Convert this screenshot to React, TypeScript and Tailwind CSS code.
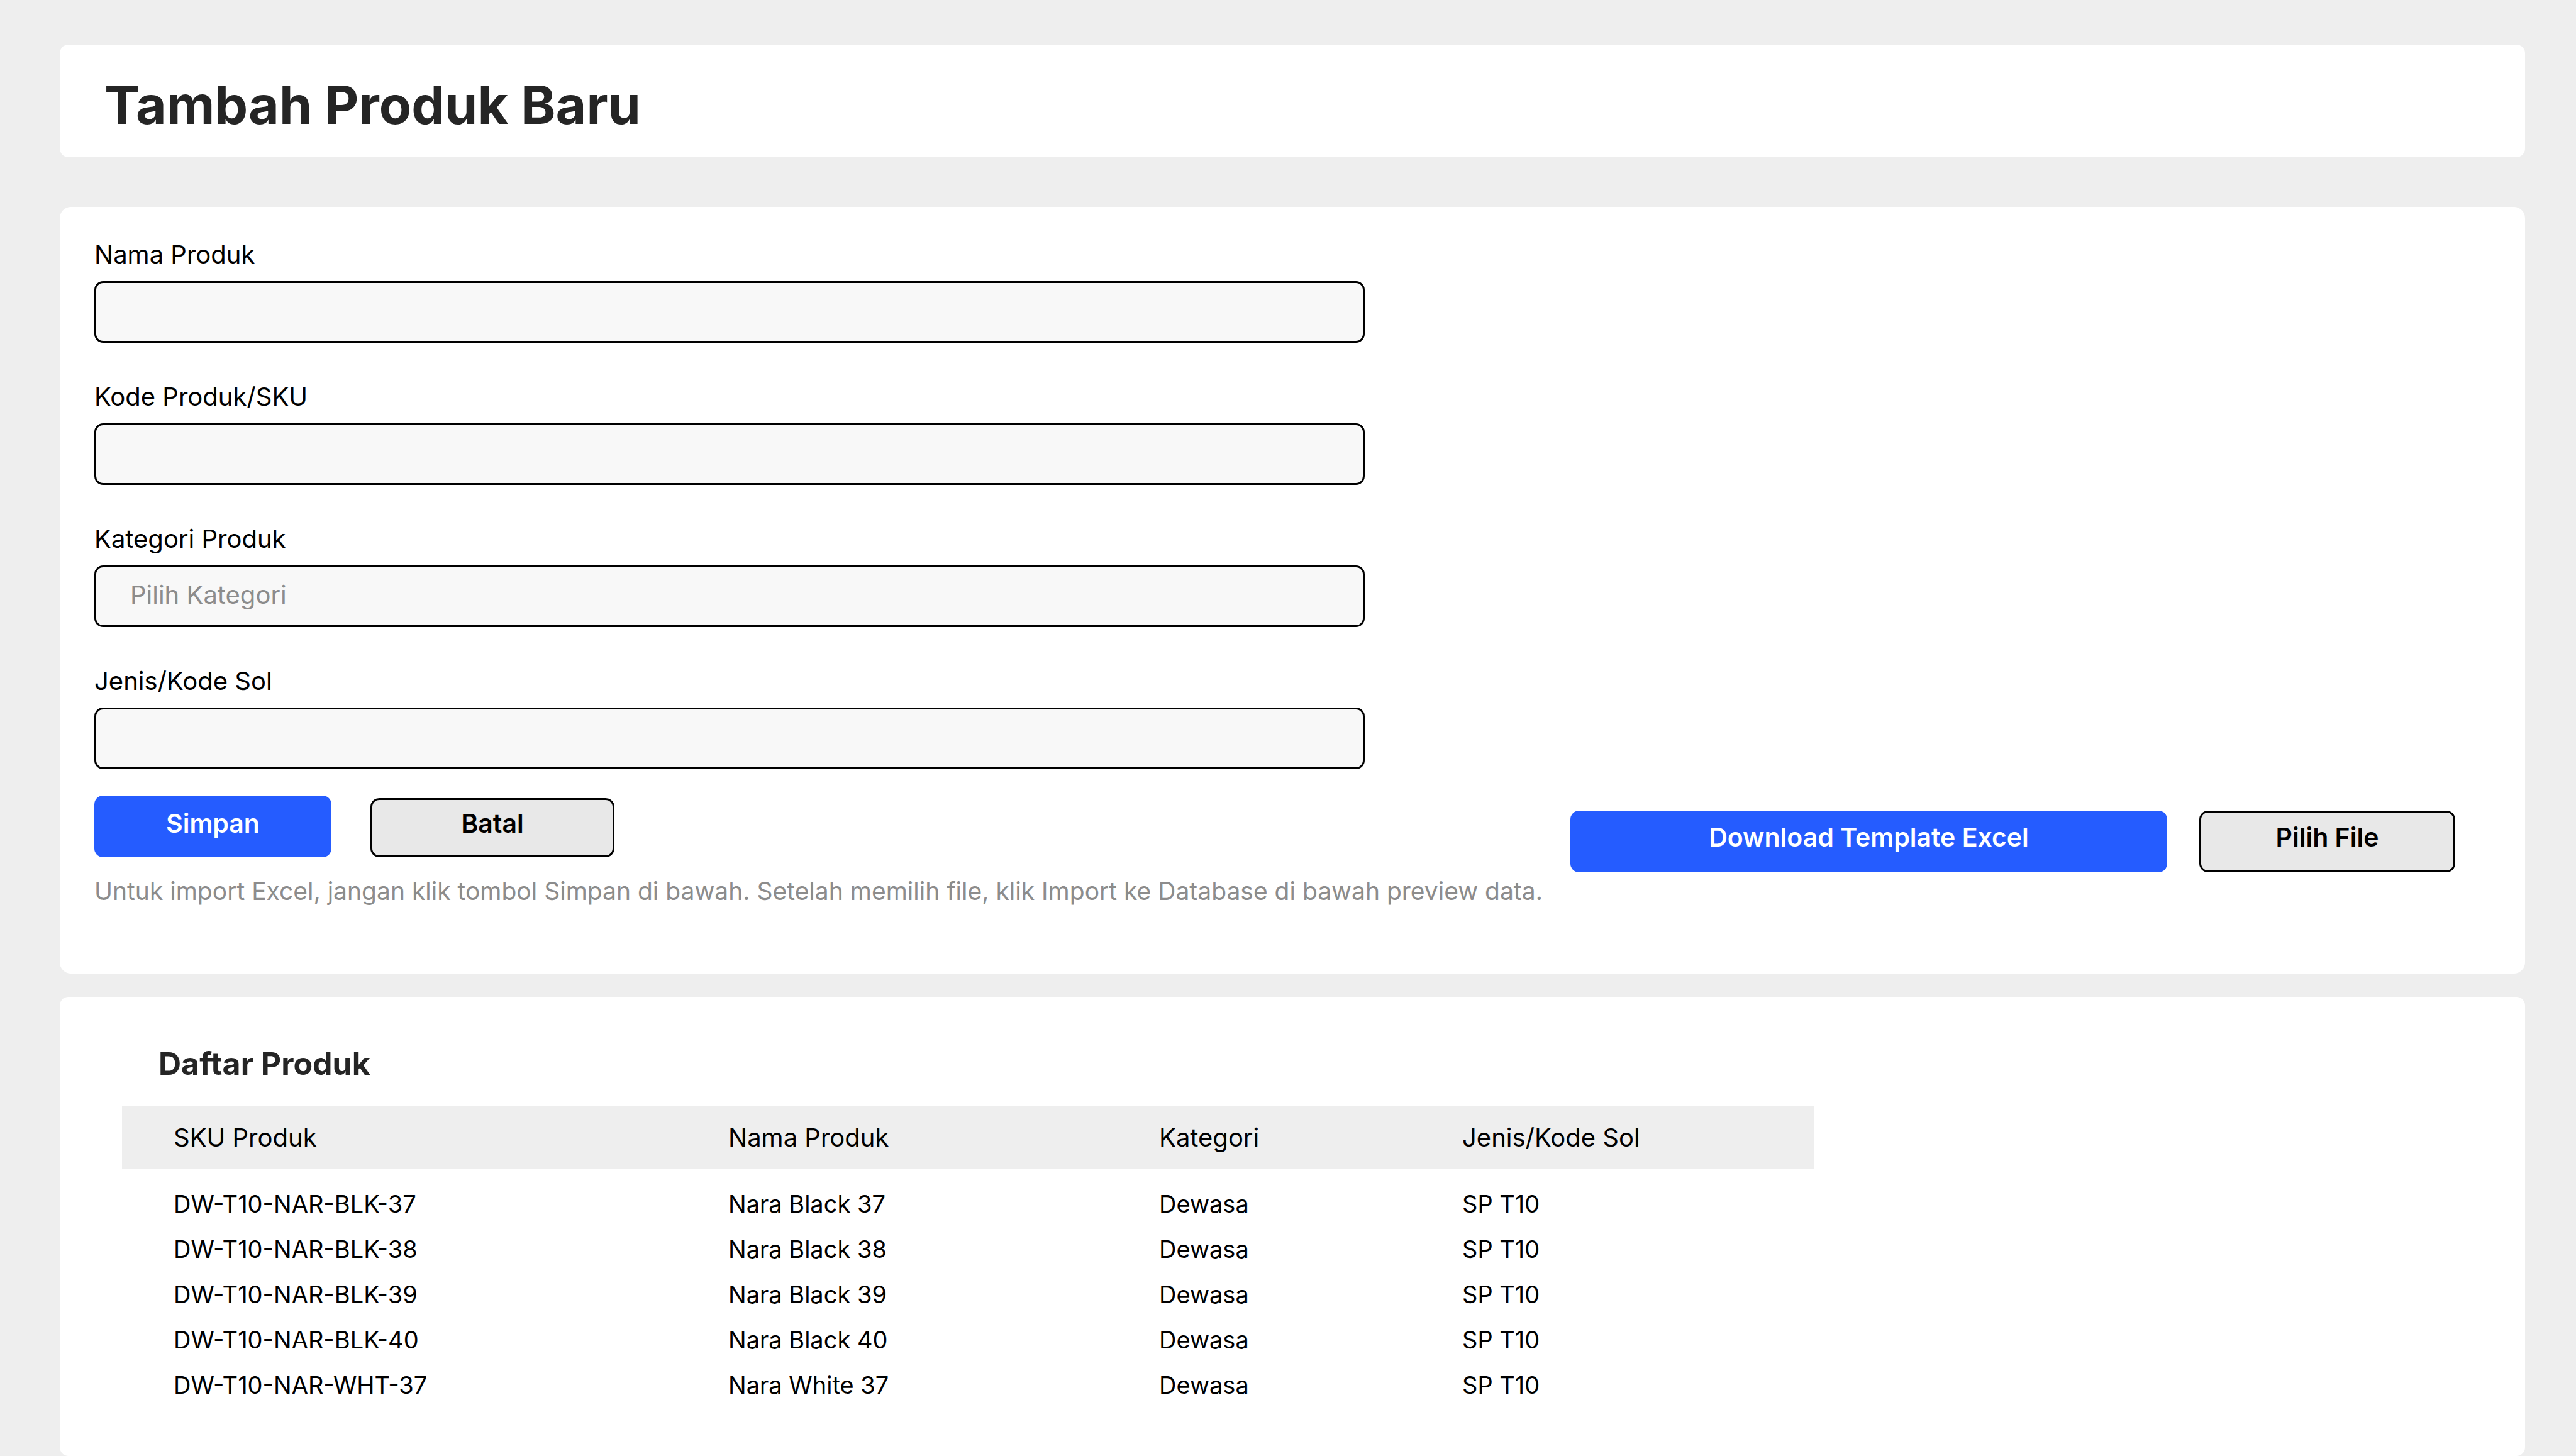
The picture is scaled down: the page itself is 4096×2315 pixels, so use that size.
import type { ReactNode } from "react";

const products = [
  { sku: "DW-T10-NAR-BLK-37", name: "Nara Black 37", category: "Dewasa", sole: "SP T10" },
  { sku: "DW-T10-NAR-BLK-38", name: "Nara Black 38", category: "Dewasa", sole: "SP T10" },
  { sku: "DW-T10-NAR-BLK-39", name: "Nara Black 39", category: "Dewasa", sole: "SP T10" },
  { sku: "DW-T10-NAR-BLK-40", name: "Nara Black 40", category: "Dewasa", sole: "SP T10" },
  { sku: "DW-T10-NAR-WHT-37", name: "Nara White 37", category: "Dewasa", sole: "SP T10" },
];

const control =
  "h-[98px] w-full appearance-none rounded-[14px] border-3 border-black bg-[#f8f8f8] px-[54px] pb-1 text-[40px] outline-none";

const primary = "h-[98px] rounded-[14px] bg-[#255cff] text-[41px] font-semibold text-white";
const secondary = "rounded-[14px] border-3 border-black bg-[#e8e8e8] pb-3 text-[41px] font-semibold text-black";

function Field({ id, label, children }: { id: string; label: string; children: ReactNode }) {
  return (
    <div className="flex flex-col gap-3">
      <label htmlFor={id} className="text-[40px] leading-[60px]">
        {label}
      </label>
      {children}
    </div>
  );
}

export default function App() {
  return (
    <main className="flex min-h-screen flex-col bg-[#eeeeee] pt-[71px] pr-[81px] pl-[95px] font-['Inter',sans-serif] text-black">
      <header className="rounded-[14px] bg-white pt-10 pb-[27px] pl-[71px]">
        <h1 className="text-[84px] leading-[112px] font-bold text-[#252525]">Tambah Produk Baru</h1>
      </header>

      <form
        className="mt-[79px] rounded-[18px] bg-white pt-[46px] pr-[111px] pb-[103px] pl-[55px]"
        onSubmit={(event) => event.preventDefault()}
      >
        <div className="flex w-full max-w-[2020px] flex-col gap-14">
          <Field id="nama" label="Nama Produk">
            <input id="nama" type="text" className={control} />
          </Field>
          <Field id="sku" label="Kode Produk/SKU">
            <input id="sku" type="text" className={control} />
          </Field>
          <Field id="kategori" label="Kategori Produk">
            <select id="kategori" defaultValue="" className={`${control} text-[#8c8c8c]`}>
              <option value="">Pilih Kategori</option>
              <option value="dewasa">Dewasa</option>
            </select>
          </Field>
          <Field id="sol" label="Jenis/Kode Sol">
            <input id="sol" type="text" className={control} />
          </Field>
        </div>

        <div className="mt-[42px] flex items-start justify-between">
          <div className="flex flex-col gap-[26px]">
            <div className="flex items-end gap-[62px]">
              <button type="submit" className={`${primary} w-[377px] pb-2`}>
                Simpan
              </button>
              <button type="reset" className={`${secondary} h-[94px] w-[388px]`}>
                Batal
              </button>
            </div>
            <p className="text-[39px] leading-[56px] text-[#8c8c8c]">
              Untuk import Excel, jangan klik tombol Simpan di bawah. Setelah memilih file, klik Import ke Database di
              bawah preview data.
            </p>
          </div>
          <div className="mt-6 flex shrink-0 gap-[51px]">
            <button type="button" className={`${primary} w-[949px] pb-3`}>
              Download Template Excel
            </button>
            <button type="button" className={`${secondary} h-[98px] w-[407px]`}>
              Pilih File
            </button>
          </div>
        </div>
      </form>

      <section className="mt-[37px] flex-1 rounded-[14px] bg-white pt-[70px] pl-[99px]">
        <h2 className="pl-[58px] text-[50px] leading-[72px] font-bold text-[#252525]">Daftar Produk</h2>
        <table className="mt-8 w-full max-w-[2691px] table-fixed text-left">
          <colgroup>
            <col className="w-[964px]" />
            <col className="w-[685px]" />
            <col className="w-[482px]" />
            <col />
          </colgroup>
          <thead className="bg-[#eeeeee] text-[40px]">
            <tr className="h-[99px]">
              <th className="pl-[82px] font-normal">SKU Produk</th>
              <th className="font-normal">Nama Produk</th>
              <th className="font-normal">Kategori</th>
              <th className="font-normal">Jenis/Kode Sol</th>
            </tr>
          </thead>
          <tbody className="text-[38px] leading-[72px] before:block before:h-5">
            {products.map((product) => (
              <tr key={product.sku}>
                <td className="pl-[82px]">{product.sku}</td>
                <td>{product.name}</td>
                <td>{product.category}</td>
                <td>{product.sole}</td>
              </tr>
            ))}
          </tbody>
        </table>
      </section>
    </main>
  );
}
